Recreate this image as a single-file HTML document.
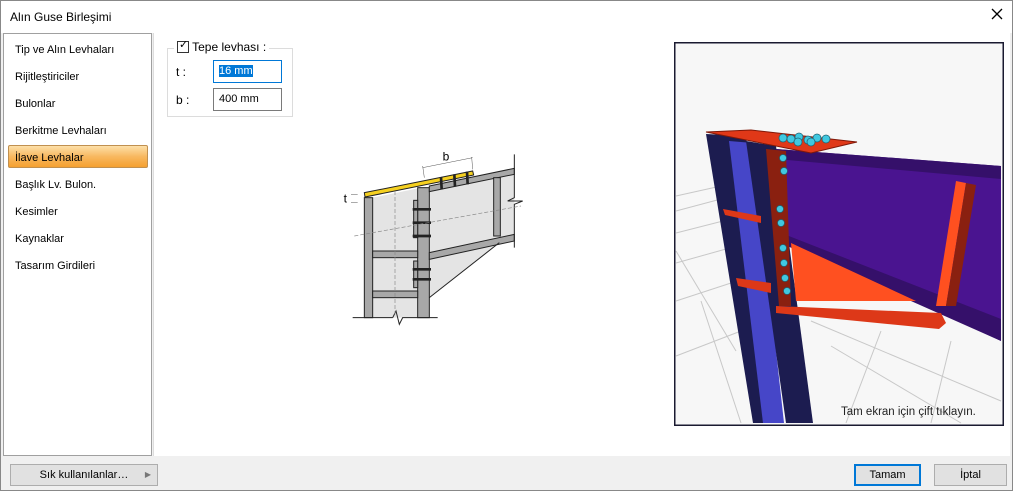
<!DOCTYPE html>
<html><head><meta charset="utf-8"><style>
*{margin:0;padding:0;box-sizing:border-box}
body{width:1013px;height:491px;background:#f0f0f0;font-family:"Liberation Sans",sans-serif;font-size:12px;color:#000;position:relative;overflow:hidden}
.win{position:absolute;left:0;top:0;width:1013px;height:491px;border:1px solid #888;background:#f0f0f0}
.title{position:absolute;left:0;top:0;width:1011px;height:32px;background:#fff}
.title span{position:absolute;left:9px;top:9px;font-size:12px}
.close{position:absolute;left:990px;top:7px;width:12px;height:12px}
.left{position:absolute;left:2px;top:32px;width:149px;height:423px;background:#fff;border:1px solid #a0a0a0}
.item{position:absolute;left:11px;font-size:11px}
.sel{position:absolute;left:4px;top:111px;width:140px;height:23px;border:1px solid #c09050;border-radius:2px;background:linear-gradient(#fde0a8,#f8b860 50%,#f5a030);}
.right{position:absolute;left:152px;top:32px;width:857px;height:423px;background:#fff;border-left:1px solid #ddd}
.grp{position:absolute;left:166px;top:47px;width:126px;height:69px;border:1px solid #dcdcdc}
.inp{position:absolute;width:69px;height:23px;border:1px solid #7a7a7a;background:#fff;font-size:11px;padding:4px 0 0 5px}
.btn{position:absolute;height:22px;border:1px solid #adadad;background:#e1e1e1;font-size:11px;text-align:center;line-height:20px}
</style></head><body>
<div class="win">
<div class="title"><span>Alın Guse Birleşimi</span><svg class="close" viewBox="0 0 12 12"><path d="M1 1L11 11M11 1L1 11" stroke="#000" stroke-width="1.3"/></svg></div>
<div class="left">
<div class="sel"></div>
<div class="item" style="top:10px">Tip ve Alın Levhaları</div>
<div class="item" style="top:37px">Rijitleştiriciler</div>
<div class="item" style="top:64px">Bulonlar</div>
<div class="item" style="top:91px">Berkitme Levhaları</div>
<div class="item" style="top:118px">İlave Levhalar</div>
<div class="item" style="top:145px">Başlık Lv. Bulon.</div>
<div class="item" style="top:172px">Kesimler</div>
<div class="item" style="top:199px">Kaynaklar</div>
<div class="item" style="top:226px">Tasarım Girdileri</div>
</div>
<div class="right"></div>
<div class="grp"></div>
<div style="position:absolute;left:173px;top:39px;background:#fff;padding:0 3px;font-size:12px"><span style="display:inline-block;width:12px;height:12px;border:1px solid #333;vertical-align:-2px;position:relative"><span style="position:absolute;left:1px;top:-4px;font-size:11px">✓</span></span> Tepe levhası :</div>
<div style="position:absolute;left:175px;top:64px">t :</div>
<div style="position:absolute;left:175px;top:92px">b :</div>
<div class="inp" style="left:212px;top:59px;border-color:#0078d7"><span style="background:#0078d7;color:#fff">16 mm</span></div>
<div class="inp" style="left:212px;top:87px">400 mm</div>

<svg style="position:absolute;left:340px;top:140px" width="190" height="190" viewBox="0 0 570 570">
<g stroke="#222" stroke-width="3">
<polygon points="95,170 230,142 230,530 95,530" fill="#e4e4e4" stroke="none"/>
<polygon points="265,140 520,85 520,290 265,340" fill="#e4e4e4" stroke="none"/>
<polygon points="265,345 475,305 265,470" fill="#e4e4e4" stroke="none"/>
<rect x="70" y="170" width="25" height="360" fill="#a8a8a8"/>
<rect x="230" y="140" width="35" height="390" fill="#a8a8a8"/>
<polygon points="265,135 520,82 520,100 265,152" fill="#a8a8a8"/>
<polygon points="265,335 520,280 520,300 265,355" fill="#a8a8a8"/>
<rect x="458" y="110" width="20" height="175" fill="#a8a8a8"/>
<line x1="265" y1="470" x2="475" y2="305"/>
<rect x="95" y="330" width="135" height="20" fill="#a8a8a8"/>
<rect x="95" y="450" width="135" height="20" fill="#a8a8a8"/>
<rect x="218" y="178" width="12" height="112" fill="#a8a8a8"/>
<rect x="218" y="360" width="12" height="80" fill="#a8a8a8"/>
<polygon points="70,155 395,90 398,102 72,168" fill="#f5d020"/>
<g stroke-width="8"><line x1="215" y1="205" x2="270" y2="205"/><line x1="215" y1="245" x2="270" y2="245"/><line x1="215" y1="285" x2="270" y2="285"/><line x1="215" y1="385" x2="270" y2="385"/><line x1="215" y1="415" x2="270" y2="415"/>
<line x1="300" y1="108" x2="302" y2="145"/><line x1="340" y1="100" x2="342" y2="137"/><line x1="378" y1="92" x2="380" y2="130"/></g>
<line x1="35" y1="530" x2="155" y2="530"/><polyline points="155,530 165,510 175,550 185,530 290,530" fill="none"/>
<polyline points="520,40 520,170 500,180 545,180 520,190 520,320" fill="none"/>
</g>
<g stroke="#888" stroke-width="2" stroke-dasharray="12,6" fill="none"><line x1="40" y1="285" x2="540" y2="195"/><line x1="162" y1="150" x2="162" y2="520"/></g>
<g stroke="#555" stroke-width="1.5"><line x1="245" y1="80" x2="395" y2="50"/><line x1="245" y1="75" x2="250" y2="110"/><line x1="392" y1="48" x2="395" y2="85"/><line x1="30" y1="160" x2="50" y2="160"/><line x1="30" y1="185" x2="50" y2="185"/></g>
<text x="305" y="58" font-size="36" font-family="Liberation Sans">b</text>
<text x="8" y="185" font-size="36" font-family="Liberation Sans">t</text>
</svg>

<svg style="position:absolute;left:673px;top:41px" width="330" height="384" viewBox="673 41 330 384">
<rect x="673" y="41" width="330" height="384" fill="#f7f7f7" stroke="#1a1a30" stroke-width="3"/>
<g stroke="#c8c8c8" stroke-width="1" fill="none">
<line x1="675" y1="195" x2="720" y2="185"/><line x1="675" y1="210" x2="720" y2="198"/><line x1="675" y1="232" x2="722" y2="220"/><line x1="675" y1="262" x2="725" y2="248"/><line x1="675" y1="300" x2="730" y2="282"/><line x1="675" y1="355" x2="740" y2="330"/><line x1="810" y1="320" x2="1000" y2="400"/><line x1="830" y1="345" x2="960" y2="422"/><line x1="880" y1="330" x2="845" y2="422"/><line x1="950" y1="340" x2="930" y2="422"/><line x1="700" y1="300" x2="740" y2="422"/><line x1="675" y1="250" x2="735" y2="350"/></g>
<polygon points="705,133 745,135 780,422 752,422" fill="#1c1c50"/>
<polygon points="728,140 752,142 783,422 762,422" fill="#4646c8"/>
<polygon points="745,140 775,145 812,422 785,422" fill="#1c1c50"/>
<polygon points="775,148 1000,165 1000,340 775,235" fill="#4a1490"/>
<polygon points="775,148 1000,165 1000,178 775,158" fill="#35106a"/>
<polygon points="775,230 1000,318 1000,340 775,240" fill="#35106a"/>
<polygon points="765,148 785,150 790,305 778,305" fill="#8a2010"/>
<polygon points="790,242 795,300 915,300" fill="#ff5020"/>
<polygon points="775,305 940,312 945,322 938,328 775,312" fill="#dd3818"/>
<polygon points="955,180 965,182 945,305 935,305" fill="#ff5020"/>
<polygon points="965,182 975,184 955,305 945,305" fill="#8a2010"/>
<polygon points="722,208 760,215 760,222 724,214" fill="#dd3818"/>
<polygon points="735,277 770,282 770,292 737,285" fill="#dd3818"/>
<polygon points="705,131 750,129 856,141 810,152" fill="#e03818" stroke="#801808"/>
<g fill="#40c8e0" stroke="#206070" stroke-width="0.7">
<circle cx="782" cy="157" r="3.5"/><circle cx="783" cy="170" r="3.5"/><circle cx="779" cy="208" r="3.5"/><circle cx="780" cy="222" r="3.5"/><circle cx="782" cy="247" r="3.5"/><circle cx="783" cy="262" r="3.5"/><circle cx="784" cy="277" r="3.5"/><circle cx="786" cy="290" r="3.5"/>
<circle cx="782" cy="137" r="4"/><circle cx="790" cy="138" r="4"/><circle cx="798" cy="136" r="4"/><circle cx="807" cy="139" r="4"/><circle cx="816" cy="137" r="4"/><circle cx="825" cy="138" r="4"/><circle cx="797" cy="141" r="4"/><circle cx="810" cy="141" r="4"/></g>
<text x="840" y="414" font-size="11.5" font-family="Liberation Sans" fill="#222">Tam ekran için çift tıklayın.</text>
</svg>

<div class="btn" style="left:9px;top:463px;width:148px">Sık kullanılanlar…<span style="position:absolute;right:6px;color:#777;font-size:8px">▶</span></div>
<div class="btn" style="left:853px;top:463px;width:67px;border:2px solid #0078d7;line-height:18px">Tamam</div>
<div class="btn" style="left:933px;top:463px;width:73px">İptal</div>
</div>
</body></html>
